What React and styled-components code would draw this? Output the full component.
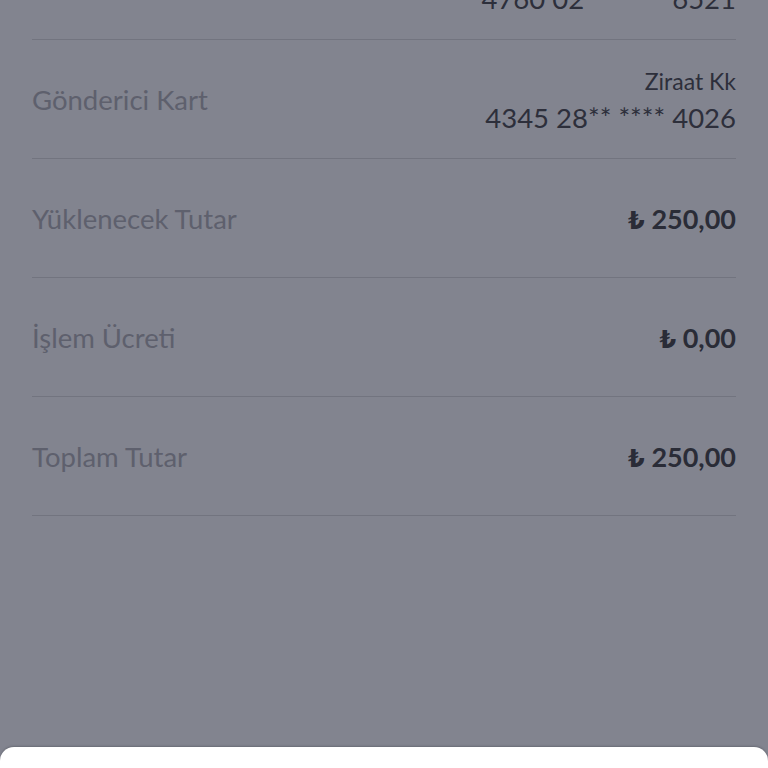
import React from "react";
import styled, { createGlobalStyle } from "styled-components";

const GlobalStyle = createGlobalStyle`
  html, body {
    margin: 0;
    padding: 0;
    background: #82848f;
  }
  * { box-sizing: border-box; }
`;

const rows = [
  { label: "", top: "", bottom: ["4760 02", "6521"] },
  { label: "Gönderici Kart", top: "Ziraat Kk", bottom: ["4345 28** **** 4026"] },
  { label: "Yüklenecek Tutar", amount: "250,00" },
  { label: "İşlem Ücreti", amount: "0,00" },
  { label: "Toplam Tutar", amount: "250,00" },
];

function App() {
  return (
    <Screen>
      <GlobalStyle />
      <List>
        {rows.map((r, i) => (
          <Row key={i}>
            <Label>{r.label}</Label>
            {r.amount ? (
              <Amount>
                <Lira>₺</Lira> {r.amount}
              </Amount>
            ) : (
              <ValueStack>
                <SubValue>{r.top || "\u00a0"}</SubValue>
                <MainValue>
                  {r.bottom.map((b) => (
                    <span key={b}>{b}</span>
                  ))}
                </MainValue>
              </ValueStack>
            )}
          </Row>
        ))}
      </List>
      <Sheet />
    </Screen>
  );
}

export default App;

const Screen = styled.div`
  position: relative;
  height: 768px;
  overflow: hidden;
  background: #82848f;
  font-family: Lato, "Noto Sans", sans-serif;
`;

const List = styled.div`
  margin-top: -79px;
  padding: 0 32px;
  display: flex;
  flex-direction: column;
`;

const Row = styled.div`
  height: 119px;
  border-bottom: 1px solid #72747f;
  display: flex;
  align-items: center;
  justify-content: space-between;
`;

const Label = styled.div`
  font-size: 27.5px;
  color: #5e606d;
`;

const ValueStack = styled.div`
  display: flex;
  flex-direction: column;
  align-items: flex-end;
  gap: 7px;
  padding-top: 2px;
`;

const SubValue = styled.div`
  font-size: 23px;
  line-height: 28px;
  color: #2d2f3b;
`;

const MainValue = styled.div`
  display: flex;
  gap: 88px;
  font-size: 27.5px;
  line-height: 32px;
  color: #2d2f3b;
`;

const Amount = styled.div`
  font-size: 27px;
  font-weight: 700;
  color: #2a2c37;
`;

const Lira = styled.span`
  font-family: "DejaVu Sans", "Noto Sans", sans-serif;
  font-size: 24px;
`;

const Sheet = styled.div`
  position: absolute;
  left: 0;
  right: 0;
  bottom: -20px;
  height: 41px;
  background: #ffffff;
  border-radius: 14px 14px 0 0;
  box-shadow: 0 -1px 2px rgba(60, 62, 72, 0.35);
`;
